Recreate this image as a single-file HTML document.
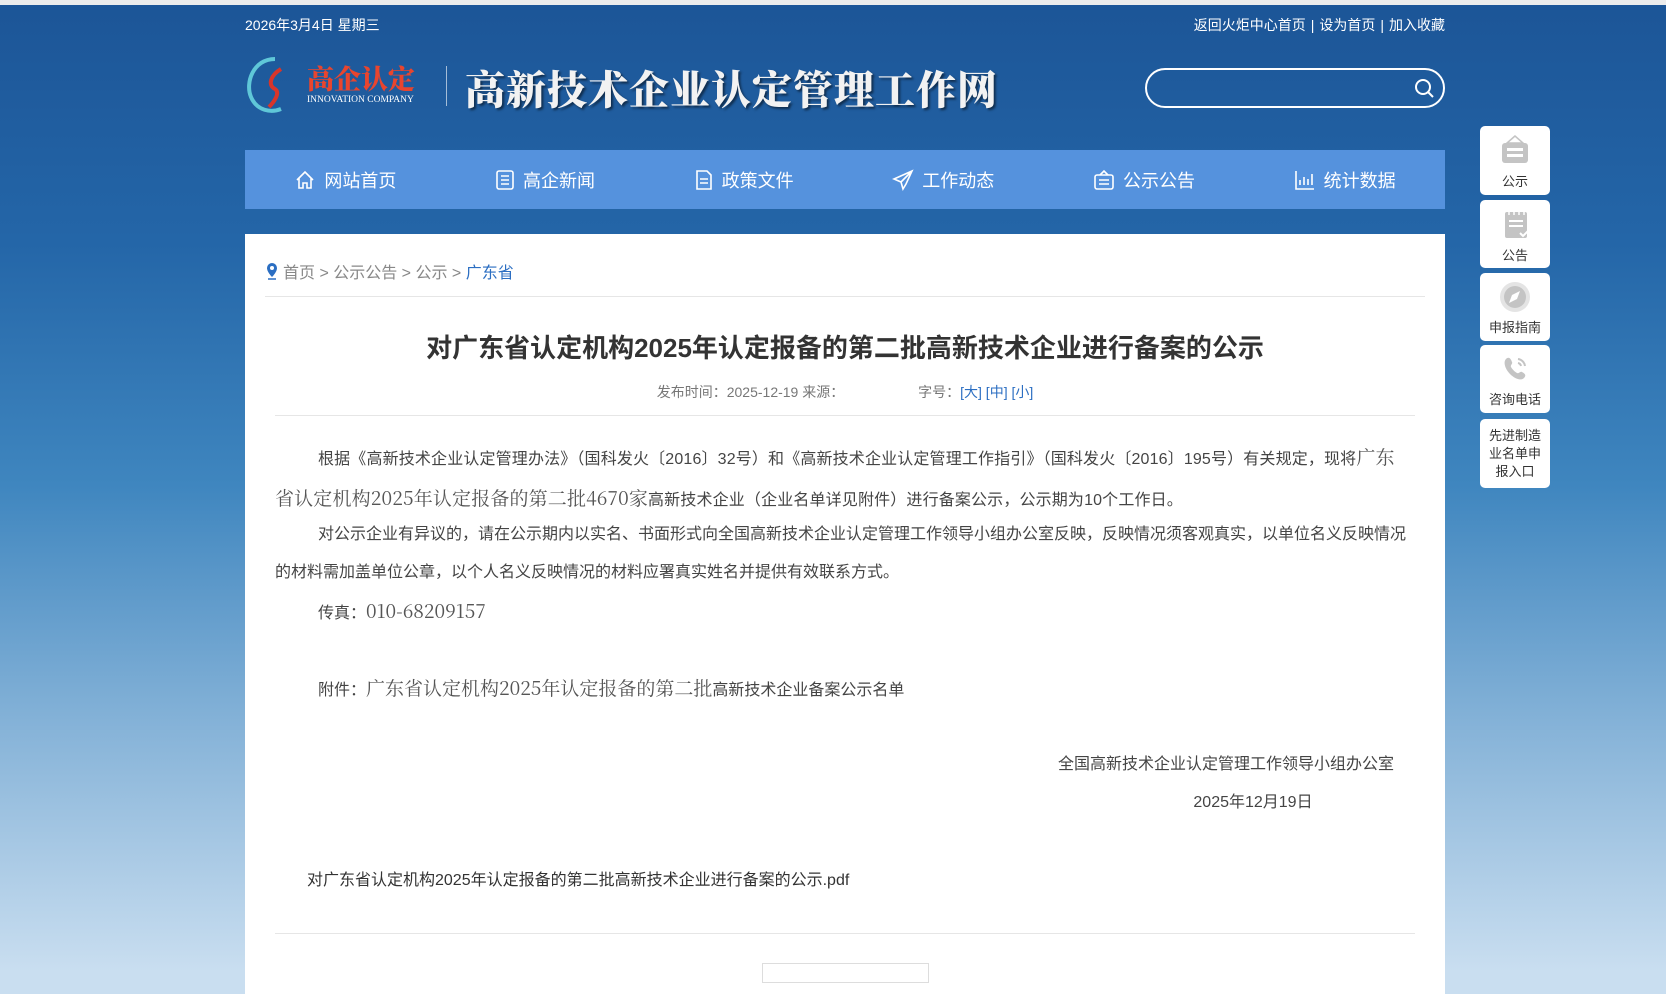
<!DOCTYPE html>
<html style="height:971px;background:#c9def0"><head><meta charset="utf-8">
<style>
*{margin:0;padding:0;box-sizing:border-box}
body{width:1666px;height:971px;overflow:hidden;font-family:"Liberation Sans","Noto Sans CJK SC",sans-serif;background:linear-gradient(180deg,#1c5597 0%,#2466a8 25%,#3f86bf 50%,#86b3d8 75%,#c9def0 100%) no-repeat;background-size:1666px 971px;position:relative}
.topbar{position:absolute;left:0;top:0;width:1666px;height:5px;background:#ececec}
.abs{position:absolute}
.date{left:245px;top:15px;color:#fff;font-size:14px}
.links{right:221px;top:15px;color:#fff;font-size:14px}
.links span{margin:0 5px}
.logo{left:245px;top:55px;width:185px;height:60px}
.sep{left:446px;top:66px;width:1px;height:40px;background:rgba(255,255,255,.6)}
.sitename{left:465px;top:59px;font-family:"Noto Serif CJK SC",serif;font-weight:900;font-size:40px;color:#f2f2f2;letter-spacing:1px;text-shadow:2px 2px 2px rgba(0,0,0,.5)}
.search{left:1145px;top:68px;width:300px;height:40px;border:2px solid #fff;border-radius:20px}
.nav{left:245px;top:150px;width:1200px;height:59px;background:#5592dd;display:flex;justify-content:space-around;align-items:center;color:#fff;font-size:18px}
.nav div{display:flex;align-items:center;gap:8px}
.main{left:245px;top:234px;width:1200px;height:760px;background:#fff}
.crumb{left:265px;top:259px;font-size:16px;color:#888}
.crumb b{font-weight:normal;color:#2b6ec2}
.line{height:1px;background:#e6e6e6}
.title{left:245px;width:1200px;top:328px;text-align:center;font-size:26px;font-weight:bold;color:#333}
.meta{left:245px;width:1200px;top:382px;text-align:center;font-size:14px;color:#777}
.meta i{font-style:normal;color:#2b6ec2}
.p{left:275px;width:1135px;font-size:16px;color:#444;line-height:38px}
.big{font-family:"Noto Serif CJK SC",serif;font-size:19px;color:#555}
.side{left:1480px;width:70px;background:#fff;border-radius:5px;text-align:center;font-size:13px;color:#333}
</style></head><body>
<div class="topbar"></div>
<div class="abs date">2026年3月4日 星期三</div>
<div class="abs links">返回火炬中心首页<span>|</span>设为首页<span>|</span>加入收藏</div>
<svg class="abs logo" viewBox="0 0 185 60">
<path d="M30 4 C8 4 0 28 6 42 C12 56 26 58 36 54" fill="none" stroke="#5fc7d8" stroke-width="4"/>
<path d="M36 14 C26 20 22 30 30 34 C36 38 28 48 24 52" fill="none" stroke="#d8352a" stroke-width="4"/>
<text x="62" y="34" font-family="Noto Serif CJK SC,serif" font-weight="900" font-size="27" fill="#e8452e">高企认定</text>
<text x="62" y="47" font-family="Liberation Serif,serif" font-size="9.5" fill="#fff">INNOVATION COMPANY</text>
</svg>
<div class="abs sep"></div>
<div class="abs sitename">高新技术企业认定管理工作网</div>
<div class="abs search"><svg style="position:absolute;right:8px;top:7px" width="22" height="22" viewBox="0 0 22 22"><circle cx="10" cy="10" r="7" fill="none" stroke="#fff" stroke-width="2"/><path d="M15 15l5 5" stroke="#fff" stroke-width="2"/></svg></div>
<div class="abs nav">
<div><svg width="22" height="22" viewBox="0 0 22 22" fill="none" stroke="#fff" stroke-width="1.6"><path d="M3 11L11 3l8 8M5 9v10h4v-5h4v5h4V9"/></svg>网站首页</div>
<div><svg width="20" height="22" viewBox="0 0 20 22" fill="none" stroke="#fff" stroke-width="1.6"><rect x="2" y="2" width="16" height="18" rx="2"/><path d="M6 7h8M6 11h8M6 15h8"/></svg>高企新闻</div>
<div><svg width="20" height="22" viewBox="0 0 20 22" fill="none" stroke="#fff" stroke-width="1.6"><path d="M3 2h10l4 4v14H3z"/><path d="M6 10h8M6 14h8"/></svg>政策文件</div>
<div><svg width="22" height="22" viewBox="0 0 22 22" fill="none" stroke="#fff" stroke-width="1.6"><path d="M20 2L2 10l7 3 2 7 3-5zM9 13l11-11"/></svg>工作动态</div>
<div><svg width="22" height="22" viewBox="0 0 22 22" fill="none" stroke="#fff" stroke-width="1.6"><rect x="2" y="6" width="18" height="14" rx="2"/><path d="M6 11h10M6 15h10M7 6l4-4 4 4"/></svg>公示公告</div>
<div><svg width="22" height="22" viewBox="0 0 22 22" fill="none" stroke="#fff" stroke-width="1.6"><path d="M2 2v18h18"/><path d="M6 16V11M10 16V8M14 16V10M18 16V5"/></svg>统计数据</div>
</div>
<div class="abs main"></div>
<div class="abs crumb"><svg width="14" height="18" viewBox="0 0 14 18" style="vertical-align:-2px;margin-right:4px"><path d="M7 1a5 5 0 0 0-5 5c0 4 5 9 5 9s5-5 5-9a5 5 0 0 0-5-5z" fill="#2b6ec2"/><circle cx="7" cy="6" r="2" fill="#fff"/><path d="M3 17h8" stroke="#2b6ec2" stroke-width="1.5"/></svg>首页 &gt; 公示公告 &gt; 公示 &gt; <b>广东省</b></div>
<div class="abs line" style="left:265px;top:296px;width:1160px"></div>
<div class="abs title">对广东省认定机构2025年认定报备的第二批高新技术企业进行备案的公示</div>
<div class="abs meta">发布时间：2025-12-19 来源： &nbsp; &nbsp; &nbsp; &nbsp; &nbsp; &nbsp; &nbsp; &nbsp; &nbsp; 字号：<i>[大] [中] [小]</i></div>
<div class="abs line" style="left:275px;top:415px;width:1140px"></div>
<div class="abs p" style="top:438px;text-indent:43px;letter-spacing:0.15px">根据《高新技术企业认定管理办法》（国科发火〔2016〕32号）和《高新技术企业认定管理工作指引》（国科发火〔2016〕195号）有关规定，现将<span class="big">广东省认定机构2025年认定报备的第二批4670家</span>高新技术企业（企业名单详见附件）进行备案公示，公示期为10个工作日。</div>
<div class="abs p" style="top:516px;text-indent:43px">对公示企业有异议的，请在公示期内以实名、书面形式向全国高新技术企业认定管理工作领导小组办公室反映，反映情况须客观真实，以单位名义反映情况的材料需加盖单位公章，以个人名义反映情况的材料应署真实姓名并提供有效联系方式。</div>
<div class="abs p" style="top:592px;text-indent:43px">传真：<span class="big">010-68209157</span></div>
<div class="abs p" style="top:669px;text-indent:43px">附件：<span class="big">广东省认定机构2025年认定报备的第二批</span>高新技术企业备案公示名单</div>
<div class="abs p" style="top:746px;left:1000px;width:394px;text-align:right">全国高新技术企业认定管理工作领导小组办公室</div>
<div class="abs p" style="top:784px;left:1150px;width:206px;text-align:center">2025年12月19日</div>
<div class="abs" style="left:307px;top:866px;font-size:16px;color:#333">对广东省认定机构2025年认定报备的第二批高新技术企业进行备案的公示.pdf</div>
<div class="abs line" style="left:275px;top:933px;width:1140px"></div>
<div class="abs" style="left:762px;top:963px;width:167px;height:20px;border:1px solid #ddd"></div>

<div class="abs side" style="top:126px;height:69px"><svg width="34" height="32" viewBox="0 0 34 32" style="margin-top:8px"><path d="M17 2l-8 7h16z" fill="none" stroke="#c4c4c4" stroke-width="1.5"/><rect x="4" y="9" width="26" height="20" rx="3" fill="#c4c4c4"/><rect x="9" y="14" width="16" height="3" fill="#fff"/><rect x="9" y="20" width="16" height="3" fill="#fff"/></svg><div style="margin-top:2px">公示</div></div>
<div class="abs side" style="top:200px;height:68px"><svg width="34" height="32" viewBox="0 0 34 32" style="margin-top:8px"><rect x="7" y="4" width="22" height="26" rx="2" fill="#c4c4c4"/><path d="M11 2v5M16 2v5M21 2v5M26 2v5" stroke="#fff" stroke-width="1.5"/><rect x="11" y="12" width="14" height="2" fill="#fff"/><rect x="11" y="17" width="14" height="2" fill="#fff"/><path d="M22 25l3 3 5-5" stroke="#fff" stroke-width="2" fill="none"/></svg><div style="margin-top:2px">公告</div></div>
<div class="abs side" style="top:273px;height:68px"><svg width="34" height="32" viewBox="0 0 34 32" style="margin-top:8px"><circle cx="17" cy="16" r="15" fill="#e4e4e4"/><circle cx="17" cy="16" r="11" fill="#c4c4c4"/><path d="M22 10l-3 8-8 4 3-8z" fill="#fff"/></svg><div style="margin-top:1px">申报指南</div></div>
<div class="abs side" style="top:345px;height:68px"><svg width="34" height="32" viewBox="0 0 34 32" style="margin-top:8px"><path d="M8 6c3-3 5 0 6 3 1 2-2 3-1 5s4 5 6 6 3-2 5-1 5 3 2 6-9 1-14-4-7-12-4-15z" fill="#c4c4c4"/><path d="M20 6a8 8 0 0 1 7 7M20 10a4 4 0 0 1 3 3" stroke="#c4c4c4" stroke-width="2" fill="none"/></svg><div style="margin-top:1px">咨询电话</div></div>
<div class="abs side" style="top:419px;height:69px;padding-top:8px;line-height:18px">先进制造<br>业名单申<br>报入口</div>
</body></html>
